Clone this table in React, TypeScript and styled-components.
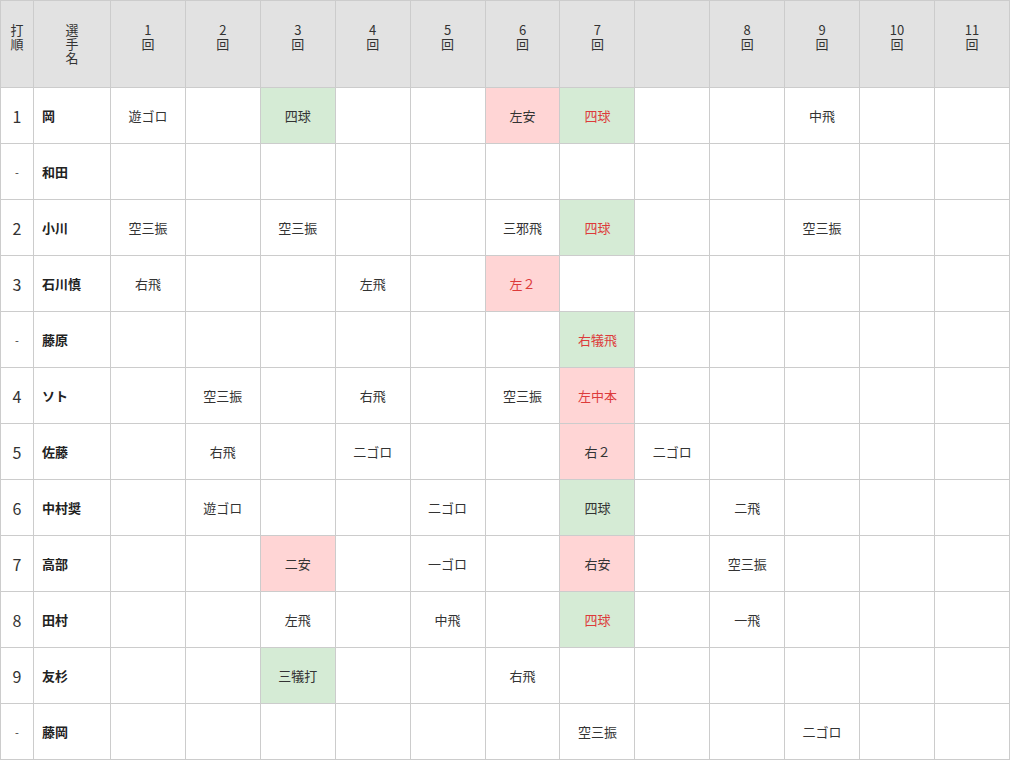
import React from "react";
import styled, { createGlobalStyle } from "styled-components";

const Global = createGlobalStyle`
  html, body { margin: 0; padding: 0; background: #fff; }
  body { font-family: "Noto Sans CJK JP", "Noto Sans", sans-serif; color: #333; }
`;

const Table = styled.table`
  width: 1010px;
  table-layout: fixed;
  border-collapse: separate;
  border-spacing: 0;
  border-right: 1px solid #ccc;
  border-bottom: 1px solid #ccc;
  font-family: "Noto Sans CJK JP", "Noto Sans", sans-serif;
`;

const HeadCell = styled.th`
  background: #e2e2e2;
  border-top: 1px solid #ccc;
  border-left: 1px solid #ccc;
  height: 87px;
  padding: 22px 0 0;
  box-sizing: border-box;
  vertical-align: top;
  font-weight: normal;
  font-size: 13px;
  line-height: 14px;
  color: #333;
  text-align: center;
`;

type Mark = "hit" | "walk" | undefined;

const Cell = styled.td<{ $mark?: Mark; $red?: boolean }>`
  border-top: 1px solid #ccc;
  border-left: 1px solid #ccc;
  height: 56px;
  padding: 0;
  box-sizing: border-box;
  text-align: center;
  vertical-align: middle;
  font-size: 13px;
  color: ${(p) => (p.$red ? "#dd3b3b" : "#333")};
  background: ${(p) =>
    p.$mark === "hit" ? "#ffd5d5" : p.$mark === "walk" ? "#d5ebd5" : "#fff"};
`;

const OrderCell = styled(Cell)<{ $dash?: boolean }>`
  font-size: ${(p) => (p.$dash ? "11px" : "16px")};
  color: #333;
`;

const NameCell = styled(Cell)`
  text-align: left;
  padding-left: 8px;
  font-weight: bold;
  color: #222;
`;

type Res = { t: string; m?: Mark; r?: boolean };
type Row = { order: string; name: string; cells: Record<number, Res> };

const rows: Row[] = [
  {
    order: "1",
    name: "岡",
    cells: {
      0: { t: "遊ゴロ" },
      2: { t: "四球", m: "walk" },
      5: { t: "左安", m: "hit" },
      6: { t: "四球", m: "walk", r: true },
      9: { t: "中飛" },
    },
  },
  { order: "-", name: "和田", cells: {} },
  {
    order: "2",
    name: "小川",
    cells: {
      0: { t: "空三振" },
      2: { t: "空三振" },
      5: { t: "三邪飛" },
      6: { t: "四球", m: "walk", r: true },
      9: { t: "空三振" },
    },
  },
  {
    order: "3",
    name: "石川慎",
    cells: {
      0: { t: "右飛" },
      3: { t: "左飛" },
      5: { t: "左２", m: "hit", r: true },
    },
  },
  { order: "-", name: "藤原", cells: { 6: { t: "右犠飛", m: "walk", r: true } } },
  {
    order: "4",
    name: "ソト",
    cells: {
      1: { t: "空三振" },
      3: { t: "右飛" },
      5: { t: "空三振" },
      6: { t: "左中本", m: "hit", r: true },
    },
  },
  {
    order: "5",
    name: "佐藤",
    cells: {
      1: { t: "右飛" },
      3: { t: "二ゴロ" },
      6: { t: "右２", m: "hit" },
      7: { t: "二ゴロ" },
    },
  },
  {
    order: "6",
    name: "中村奨",
    cells: {
      1: { t: "遊ゴロ" },
      4: { t: "二ゴロ" },
      6: { t: "四球", m: "walk" },
      8: { t: "二飛" },
    },
  },
  {
    order: "7",
    name: "高部",
    cells: {
      2: { t: "二安", m: "hit" },
      4: { t: "一ゴロ" },
      6: { t: "右安", m: "hit" },
      8: { t: "空三振" },
    },
  },
  {
    order: "8",
    name: "田村",
    cells: {
      2: { t: "左飛" },
      4: { t: "中飛" },
      6: { t: "四球", m: "walk", r: true },
      8: { t: "一飛" },
    },
  },
  {
    order: "9",
    name: "友杉",
    cells: {
      2: { t: "三犠打", m: "walk" },
      5: { t: "右飛" },
    },
  },
  {
    order: "-",
    name: "藤岡",
    cells: {
      6: { t: "空三振" },
      9: { t: "二ゴロ" },
    },
  },
];

const innings = ["1", "2", "3", "4", "5", "6", "7", "", "8", "9", "10", "11"];

export default function App() {
  return (
    <>
      <Global />
      <Table>
        <colgroup>
          <col style={{ width: 33 }} />
          <col style={{ width: 77 }} />
          {innings.map((_, i) => (
            <col key={i} />
          ))}
        </colgroup>
        <thead>
          <tr>
            <HeadCell>
              打<br />順
            </HeadCell>
            <HeadCell>
              選<br />手<br />名
            </HeadCell>
            {innings.map((n, i) => (
              <HeadCell key={i}>
                {n && (
                  <>
                    {n}
                    <br />回
                  </>
                )}
              </HeadCell>
            ))}
          </tr>
        </thead>
        <tbody>
          {rows.map((row, ri) => (
            <tr key={ri}>
              <OrderCell $dash={row.order === "-"}>{row.order}</OrderCell>
              <NameCell>{row.name}</NameCell>
              {innings.map((_, ci) => {
                const c = row.cells[ci];
                return (
                  <Cell key={ci} $mark={c?.m} $red={c?.r}>
                    {c?.t}
                  </Cell>
                );
              })}
            </tr>
          ))}
        </tbody>
      </Table>
    </>
  );
}
